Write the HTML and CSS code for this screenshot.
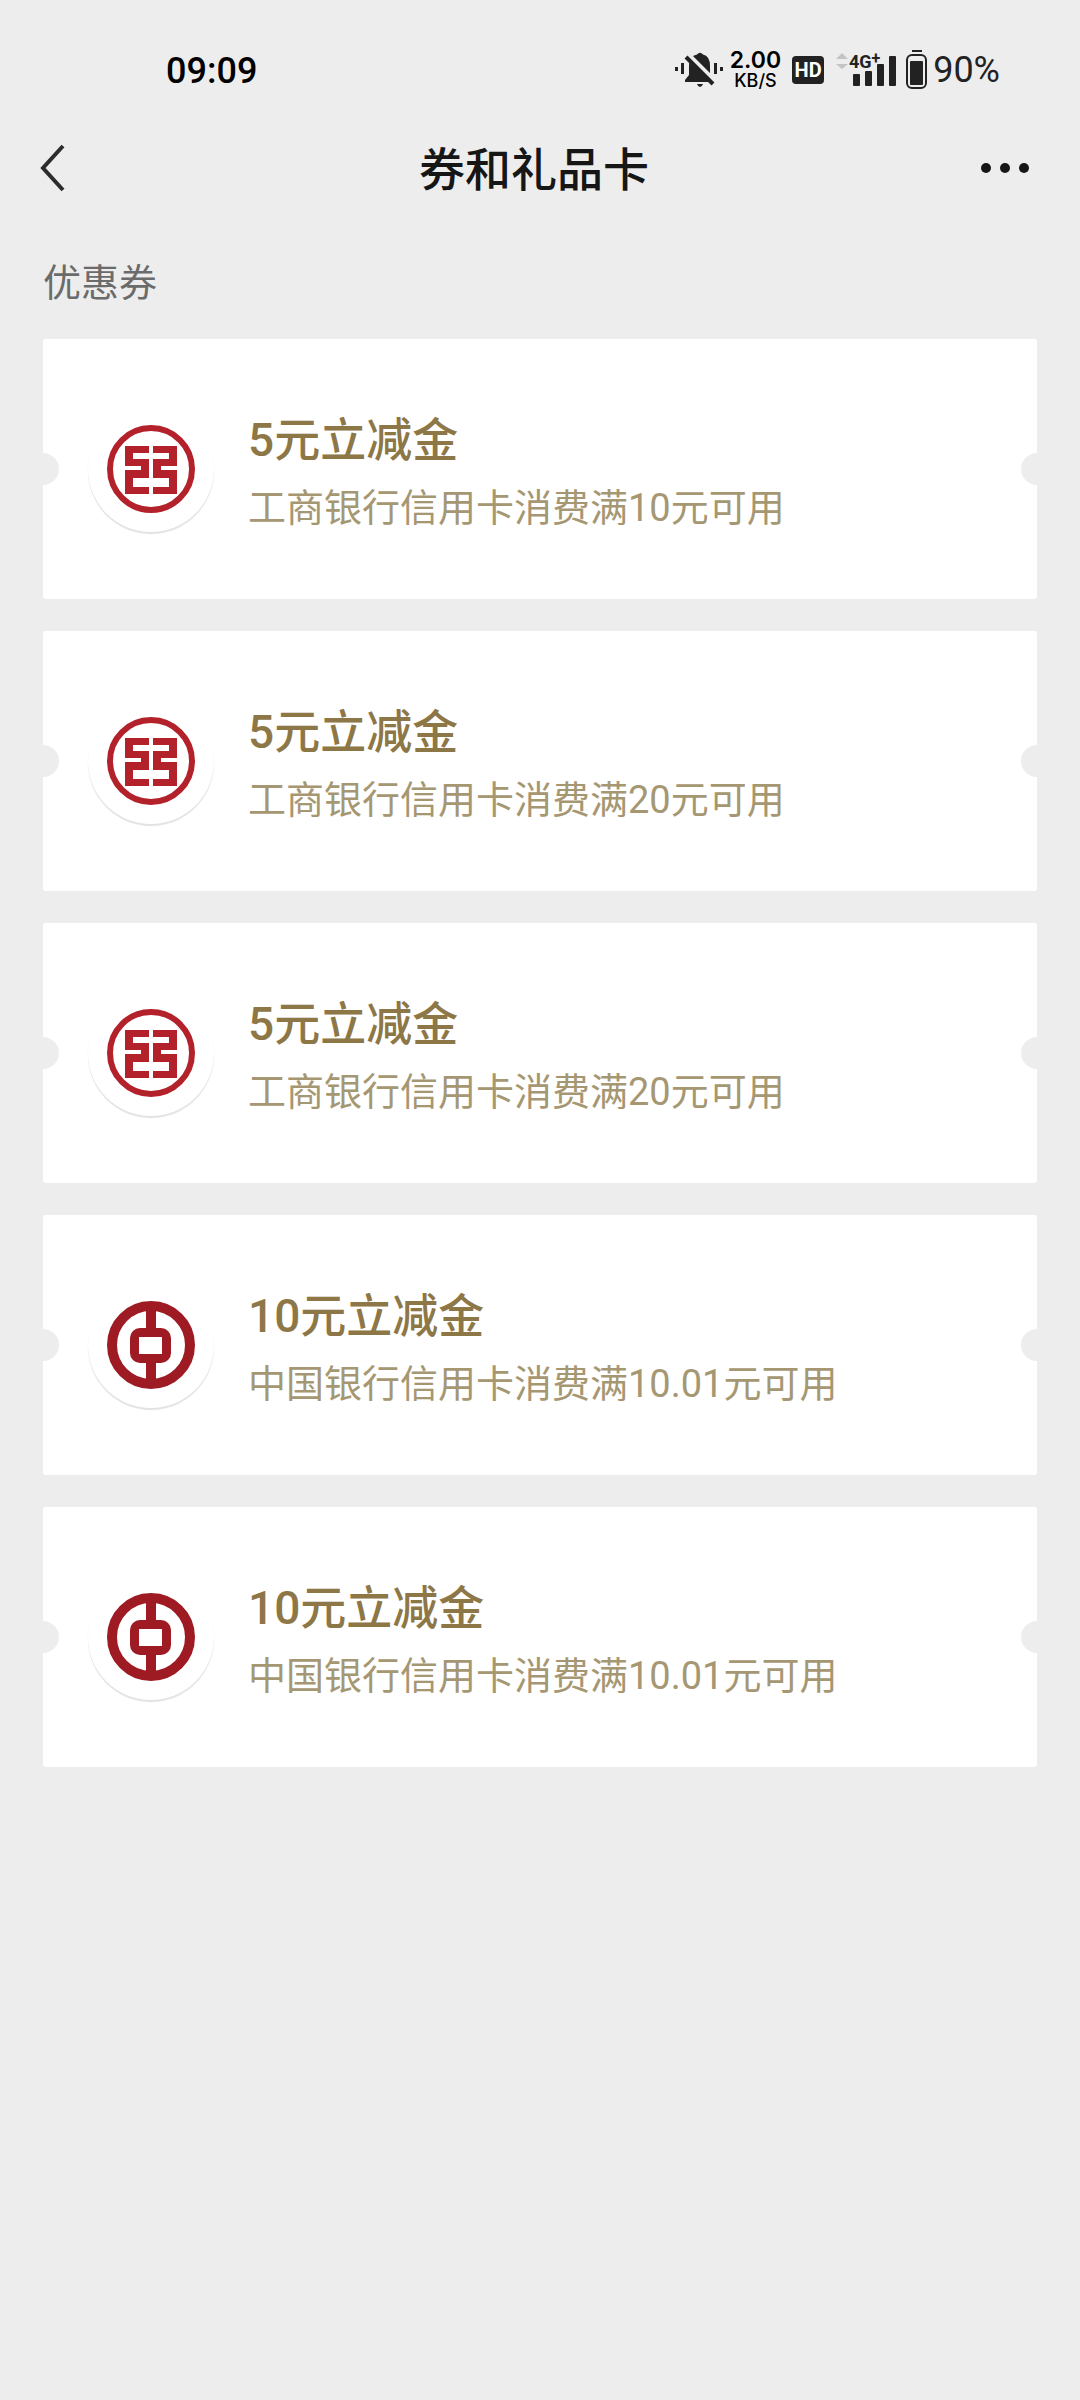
FILE: index.html
```html
<!DOCTYPE html>
<html lang="zh-CN">
<head>
<meta charset="utf-8">
<meta name="viewport" content="width=device-width, initial-scale=1">
<title>券和礼品卡</title>
<link rel="stylesheet" href="styles.css">
</head>
<body>
<svg class="sprite" aria-hidden="true">
  <symbol id="icbc" viewBox="0 0 88 88">
    <circle cx="44" cy="44" r="41" fill="#fff" stroke="#b3222b" stroke-width="6"/>
    <path fill="#b3222b" d="M18 21H42V28H26V34H42V53H26V62H42V69H18V45H34V41H18ZM70 21H46V28H62V34H46V53H62V62H46V69H70V45H54V41H70Z"/>
  </symbol>
  <symbol id="boc" viewBox="0 0 88 88">
    <circle cx="44" cy="44" r="39" fill="#fff" stroke="#9e1b23" stroke-width="10"/>
    <path stroke="#9e1b23" stroke-width="10" d="M44 8V80"/>
    <rect x="23" y="27" width="41" height="35" rx="10" fill="#9e1b23"/>
    <rect x="32" y="36" width="23" height="17" fill="#fff"/>
  </symbol>
</svg>

<div class="status">
  <time class="clock">09:09</time>
  <div class="indicators">
    <svg class="mute" viewBox="0 0 50 36" aria-label="静音" role="img">
      <g fill="#222">
        <path d="M10 30V28L14 23V14Q14 4 22 2.500Q25-1 28 2.500Q35 4 35 14V23L40 28V30Z"/>
        <path d="M22 32H28Q27 35 25 35T22 32Z"/>
        <rect x="0" y="15" width="3" height="4"/><rect x="6" y="11" width="3" height="11"/>
        <rect x="39" y="11" width="3" height="11"/><rect x="45" y="15" width="3" height="4"/>
      </g>
      <path d="M14 3L42 31" stroke="#ededed" stroke-width="4"/>
      <path d="M11 5L38 32" stroke="#222" stroke-width="4"/>
    </svg>
    <div class="speed"><span class="rate">2.00</span><span class="unit">KB/S</span></div>
    <span class="hd">HD</span>
    <svg class="signal" viewBox="0 -4 62 40" aria-label="信号" role="img">
      <path fill="#c4c4c4" d="M0 5L6 -1L12 5ZM0 10H12L6 15Z"/>
      <g fill="#222">
        <rect x="17" y="20" width="7" height="12" rx="1"/><rect x="29" y="17" width="7" height="15" rx="1"/>
        <rect x="41" y="10" width="7" height="22" rx="1"/><rect x="53" y="2" width="7" height="30" rx="1"/>
        <text class="net" x="13" y="14">4G<tspan class="plus" dy="-4">+</tspan></text>
      </g>
    </svg>
    <svg class="battery" viewBox="0 0 22 40" aria-label="电量" role="img">
      <rect x="6" y="0" width="10" height="2" fill="#222"/>
      <rect x="1" y="5" width="19" height="33" rx="5" fill="none" stroke="#222" stroke-width="2"/>
      <rect x="4" y="11" width="13" height="24" rx="1" fill="#222"/>
    </svg>
    <span class="percent">90%</span>
  </div>
</div>

<header class="bar">
  <button class="back" type="button" aria-label="返回">
    <svg viewBox="0 0 30 48"><path d="M25 2L5 24L25 46" fill="none" stroke="#2c2c2c" stroke-width="4"/></svg>
  </button>
  <h1 class="heading">券和礼品卡</h1>
  <button class="more" type="button" aria-label="更多">
    <svg viewBox="0 0 50 48"><g fill="#161616"><circle cx="6" cy="24" r="5"/><circle cx="25" cy="24" r="5"/><circle cx="44" cy="24" r="5"/></g></svg>
  </button>
</header>

<main class="content">
  <h2 class="label">优惠券</h2>
  <ul class="coupons">
    <li><a class="coupon" href="#c1"><span class="logo"><svg><use href="#icbc"/></svg></span><span class="info"><span class="name">5元立减金</span><span class="rule">工商银行信用卡消费满10元可用</span></span></a></li>
    <li><a class="coupon" href="#c2"><span class="logo"><svg><use href="#icbc"/></svg></span><span class="info"><span class="name">5元立减金</span><span class="rule">工商银行信用卡消费满20元可用</span></span></a></li>
    <li><a class="coupon" href="#c3"><span class="logo"><svg><use href="#icbc"/></svg></span><span class="info"><span class="name">5元立减金</span><span class="rule">工商银行信用卡消费满20元可用</span></span></a></li>
    <li><a class="coupon" href="#c4"><span class="logo"><svg><use href="#boc"/></svg></span><span class="info"><span class="name">10元立减金</span><span class="rule">中国银行信用卡消费满10.01元可用</span></span></a></li>
    <li><a class="coupon" href="#c5"><span class="logo"><svg><use href="#boc"/></svg></span><span class="info"><span class="name">10元立减金</span><span class="rule">中国银行信用卡消费满10.01元可用</span></span></a></li>
  </ul>
</main>
</body>
</html>
```
FILE: styles.css
```css
* { box-sizing: border-box; }

body {
  margin: 0;
  min-height: 100vh;
  background: #ededed;
  color: #161616;
  font-family: Roboto, "Noto Sans CJK SC", sans-serif;
}

svg { display: block; }
.sprite { position: absolute; width: 0; height: 0; }

button {
  padding: 0;
  border: 0;
  background: none;
  cursor: pointer;
}

.status {
  display: flex;
  align-items: flex-start;
  justify-content: space-between;
  height: 124px;
  padding: 49px 80px 0 166px;
}

.clock {
  color: #000;
  font-size: 36px;
  font-weight: 500;
  line-height: 44px;
}

.indicators { display: flex; align-items: center; height: 42px; }
.mute { width: 50px; height: 36px; }

.speed {
  display: flex;
  flex-direction: column;
  align-items: center;
  margin-left: 5px;
  padding-top: 2px;
  color: #000;
  font-family: Inter, sans-serif;
  font-weight: 600;
}
.rate { font-size: 23px; line-height: 20px; }
.unit { font-size: 18px; line-height: 22px; font-weight: 500; }

.hd {
  width: 32px;
  height: 28px;
  margin: 0 12px 0 11px;
  border-radius: 4px;
  background: #222;
  color: #fff;
  font-size: 20px;
  font-weight: 700;
  line-height: 28px;
  text-align: center;
}

.signal { width: 62px; height: 40px; overflow: visible; }
.net { font: 700 18px Roboto, sans-serif; }
.plus { font-size: 16px; }
.battery { width: 22px; height: 40px; margin: 0 5px 0 8px; }
.percent { color: #222; font-size: 36px; line-height: 44px; }

.bar {
  display: grid;
  grid-template-columns: 1fr auto 1fr;
  align-items: center;
  height: 88px;
  padding: 0 50px 0 38px;
}
.back { justify-self: start; }
.back svg { width: 30px; height: 48px; }
.more { justify-self: end; }
.more svg { width: 50px; height: 48px; }
.heading { margin: 0; padding-top: 4px; font-size: 46px; font-weight: 500; line-height: 84px; }

.content { padding: 41px 43px; }
.label {
  margin: 0 0 26px;
  color: #6b6b6b;
  font-size: 38px;
  font-weight: 400;
  line-height: 60px;
}

.coupons {
  display: flex;
  flex-direction: column;
  gap: 32px;
  margin: 0;
  padding: 0;
  list-style: none;
}

.coupon {
  position: relative;
  display: flex;
  align-items: flex-start;
  gap: 34px;
  padding: 67px 45px 57px;
  border-radius: 3px;
  background: #fff;
  overflow: hidden;
  text-decoration: none;
}

/* ticket notches on both edges */
.coupon::before,
.coupon::after {
  content: "";
  position: absolute;
  top: calc(50% - 16px);
  width: 32px;
  height: 32px;
  border-radius: 50%;
  background: #ededed;
}
.coupon::before { left: -16px; }
.coupon::after { right: -16px; }

.logo {
  display: grid;
  place-items: center;
  width: 126px;
  height: 126px;
  border-radius: 50%;
  background: #fff;
  box-shadow: 0 2px 1px #e2e2e2;
}
.logo svg { width: 88px; height: 88px; }

.info { display: flex; flex-direction: column; }
.name { color: #8e7747; font-size: 46px; font-weight: 500; line-height: 68px; }
.rule { color: #a69773; font-size: 38px; line-height: 68px; }
```
